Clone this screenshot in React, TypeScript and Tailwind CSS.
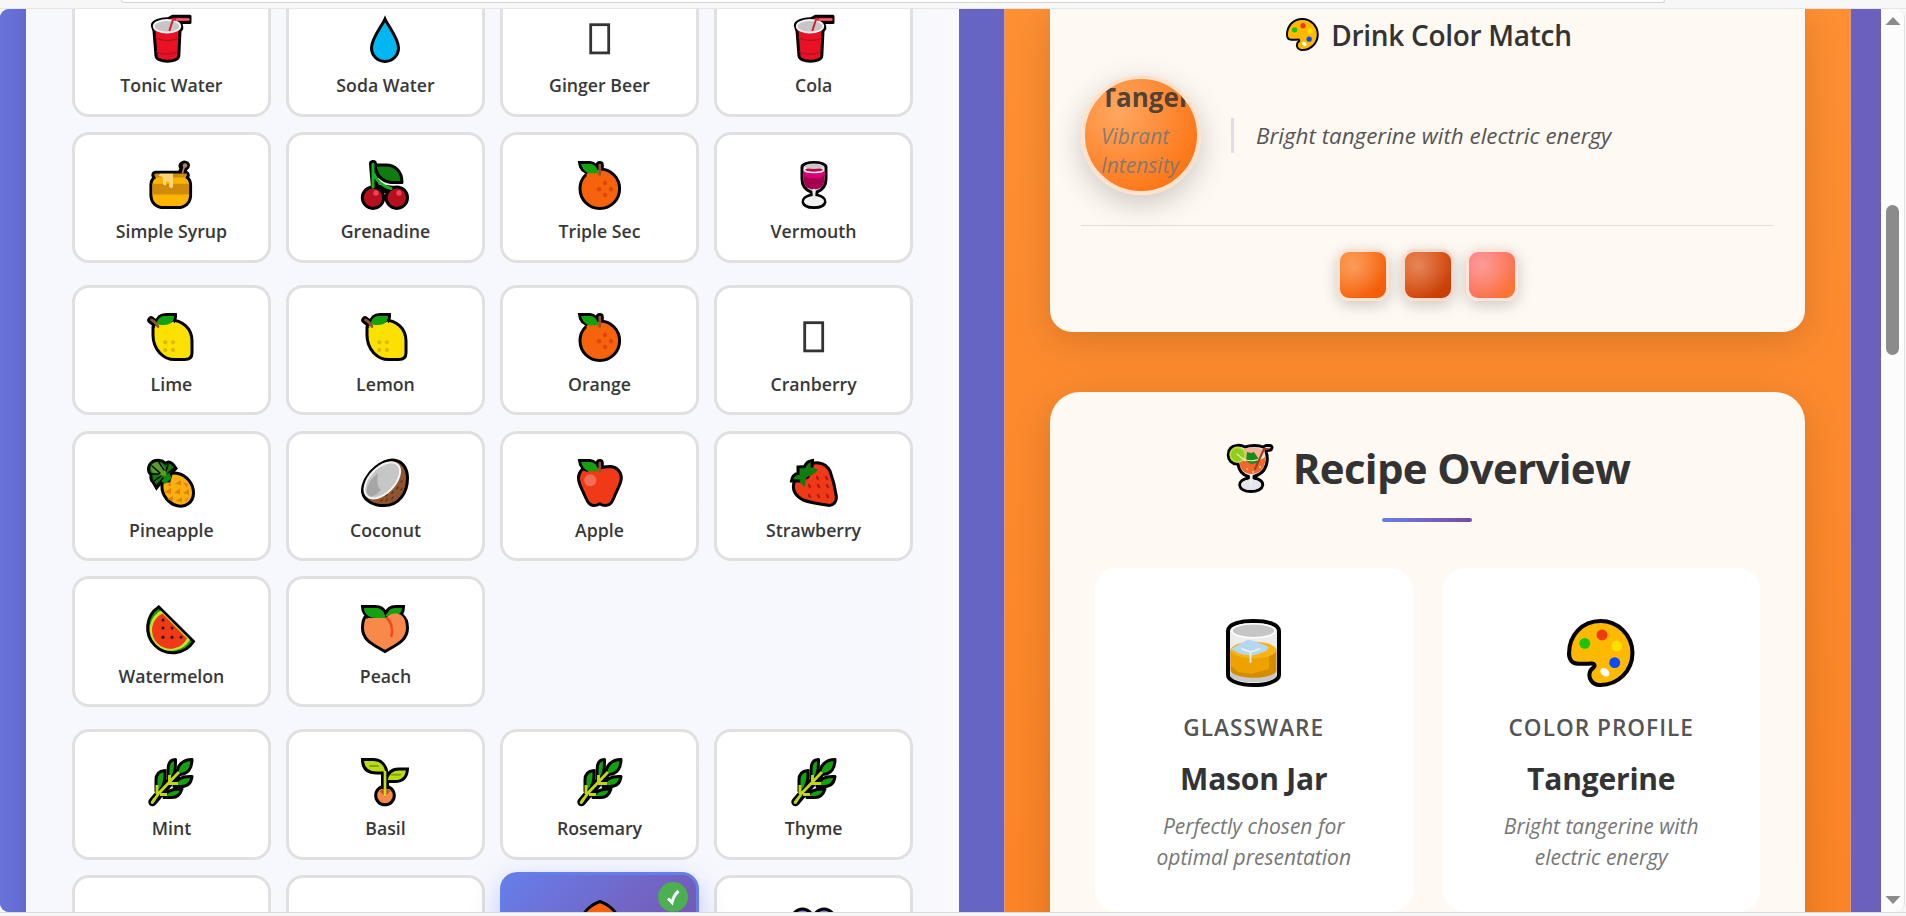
import type { ReactNode } from "react";

type IconProps = { className?: string };

function Glyph({ className = "size-12", box = "0 0 48 48", children }: IconProps & { box?: string; children: ReactNode }) {
  return (
    <svg className={`block shrink-0 overflow-visible ${className}`} viewBox={box} fill="none" stroke="#000" strokeWidth="3" strokeLinejoin="round" strokeLinecap="round">
      {children}
    </svg>
  );
}

const Cup = () => (
  <Glyph>
    <path d="M5.3 10.5C5.3 6 14 3.6 21 3.8L25.5 1.3H43V7.5H31.5C34 8.7 35.2 10.5 34.8 13.5L33 16L31.8 41C31.5 48 9.5 48 9 41L7 16Z" fill="#e81224" />
    <path d="M8 22.5C14 26.5 27 26.5 32.5 22.5M9 36.5C14 40 26 40 31 36.5" stroke="#a80f1c" strokeWidth="1" />
    <ellipse cx="20" cy="11.3" rx="13.3" ry="6.3" fill="#c6c6c6" stroke="#f2f2f2" strokeWidth="1.8" />
    <path d="M22.3 16L26 4.500H43" stroke="#d21f30" strokeWidth="2" strokeLinecap="butt" />
    <path d="M29 4.500H42" stroke="#e8677c" strokeWidth="2" strokeLinecap="butt" />
  </Glyph>
);

const Drop = () => (
  <Glyph>
    <path d="M24 4C21 11 10.5 23 10.5 33a13.5 13.5 0 0 0 27 0C37.5 23 27 11 24 4Z" fill="#00b7f1" strokeLinejoin="miter" />
  </Glyph>
);

const Missing = () => (
  <Glyph>
    <rect x="14.7" y="9.7" width="18" height="28.2" stroke="#333" strokeWidth="2.8" strokeLinejoin="miter" />
  </Glyph>
);

const Honey = () => (
  <Glyph>
    <path d="M32 12L34 7.5C31 3 36 .2 39 1.3C42.5 2.7 42.5 6 38.5 9L37.8 12Z" fill="#000" />
    <path d="M9 11.3H38C41 11.3 42.5 14.5 40 16.5C42.5 18 43.6 20 43.6 24V34C43.6 42 38 46.6 30.5 46.6H17C9.500 46.600 3.900 42 3.900 34V24C3.900 20 5 18 7.500 16.500C4.500 14.500 6 11.300 9 11.300Z" fill="#fcb400" />
    <path d="M5.400 22.700H42.100V33.600H5.400Z" fill="#d18b0b" stroke="none" />
    <path d="M7.500 12.800H40L38.500 16.500H8.500Z" fill="#cf8b10" stroke="none" />
    <path d="M13 12.800H26V26Q24 28 22.200 26V20.500H19V24Q17.500 25 16 23V17Q15 15 11.500 15Z" fill="#ffd678" stroke="none" />
    <circle cx="38" cy="4.500" r="2.300" fill="#b08060" stroke="none" />
    <path d="M37.500 5L35.500 12" stroke="#b08060" strokeWidth="1.700" />
  </Glyph>
);

const Cherries = () => (
  <Glyph>
    <path d="M12 3L14 27L34 29" stroke="#000" strokeWidth="8" />
    <path d="M14 4H25C34 4 41 10 41 21.500H30C20 20 15 13 14 4Z" fill="#107c10" />
    <circle cx="12" cy="36.700" r="10.700" fill="#b60f1d" />
    <circle cx="35.800" cy="36.700" r="10.700" fill="#b60f1d" />
    <path d="M12 3.200V26M13 13C16 21 21 25 30 27.500" stroke="#16b020" strokeWidth="3" />
    <circle cx="15" cy="32" r="2.700" fill="#f04255" stroke="none" />
    <circle cx="38" cy="32" r="2.700" fill="#f04255" stroke="none" />
  </Glyph>
);

const Orange = () => (
  <Glyph>
    <path d="M23.800 4V9" stroke="#000" strokeWidth="8" />
    <circle cx="23.800" cy="27.700" r="19.800" fill="#f7630c" />
    <path d="M3.500 1.500H14C19 2 21.500 5 22.500 12H14C8 11.500 4 8 3.500 1.500Z" fill="#13a10e" strokeLinejoin="miter" />
    <path d="M13 10.500L22 9L26 11L24 18L14 17L10 14Z" fill="#f7630c" stroke="none" />
    <path d="M5.500 3H14C19 3.500 21 6 22.500 12.300H14C9.500 12 6.500 8 5.500 3Z" fill="#13a10e" stroke="none" />
    <path d="M23.800 4V13.500" stroke="#8e562e" strokeWidth="2.700" />
    <g fill="#da4a07" stroke="none">
      <circle cx="29" cy="22" r="2.200" />
      <circle cx="23" cy="28.300" r="2.200" />
      <circle cx="35" cy="28.300" r="2.200" />
      <circle cx="29" cy="34" r="2.200" />
    </g>
  </Glyph>
);

const Wine = () => (
  <Glyph>
    <path d="M12 6C12 0 36 0 36 6V18C36 25 32 29 27 31L26.500 34C38.500 36 38 46.600 24 46.600S9.500 36 21.500 34L21 31C16 29 12 25 12 18Z" fill="#d8d8d8" />
    <path d="M13.500 9H34.500V18C34.500 25 30 28.500 24 28.500S13.500 25 13.500 18Z" fill="#a4004f" stroke="none" />
    <path d="M13.500 9H34.500V15Q24 20 13.500 15Z" fill="#d90074" stroke="none" />
    <ellipse cx="24" cy="8.800" rx="9.800" ry="2.800" fill="#c3003f" stroke="#f4f4f4" strokeWidth="1.500" />
    <ellipse cx="24" cy="5.200" rx="9" ry="2.800" fill="#c8c8c8" stroke="none" />
    <ellipse cx="24" cy="40.300" rx="10" ry="5" fill="#f2f2f2" stroke="none" />
    <path d="M24 29V38" stroke="#e8e8e8" strokeWidth="2.600" />
  </Glyph>
);

const Lemon = () => (
  <Glyph>
    <path d="M4 7L9 11" strokeWidth="7.500" />
    <path d="M6 14V22C6 37 17 46.600 27.500 46.600H37.500C42.500 46.600 45 44.500 45 40V28C45 15 35 7 23 7Z" fill="#fce100" />
    <path d="M9 10.500C10 4.500 14 1.500 19 1.500H28.500C29 8 25 12.500 17 12.500Z" fill="#13a10e" strokeLinejoin="miter" />
    <path d="M7.500 14L10 11H17C23 11 25 9 26.500 8.500L29 14L15 20Z" fill="#fce100" stroke="none" />
    <path d="M9.500 10.500C11 5 14 3 18 3H27C27 8 24 12 17 12C13 12 11 11.500 9.500 10.500Z" fill="#13a10e" stroke="none" />
    <path d="M4.500 7C7 8 9 10 11 13.500" stroke="#8e562e" strokeWidth="2.700" />
    <g fill="#d9b800" stroke="none">
      <circle cx="18.300" cy="29.300" r="2.100" />
      <circle cx="26" cy="29.300" r="2.100" />
      <circle cx="18.300" cy="37" r="2.100" />
      <circle cx="26" cy="37" r="2.100" />
    </g>
  </Glyph>
);

const Pineapple = () => (
  <Glyph>
    <ellipse cx="30.700" cy="30.600" rx="14.500" ry="17.700" transform="rotate(-38 30.700 30.600)" fill="#fcb00f" />
    <path d="M2 13C0 6 5 .5 13 1.500C16 1.500 17 3 18.500 4.500C22 1.500 25 4 26.500 6L29 9.500L24 15L22 22L15 22L9.500 29L6 23C3 21 4 18 4 16Z" fill="#107c10" strokeLinejoin="miter" />
    <path d="M22 14L14 22L18 25L25 19Z" fill="#0d8a12" stroke="none" />
    <path d="M4 9C4 4 9 2 14 4L19 11V17L12 16L5 13Z" fill="#5b9b28" stroke="none" />
    <path d="M5 7L13 14M12 3.500L17 11M21 5.500L19 12M27 9L21 14M4 15H12M7 22L14 17M10 26L16 19" strokeWidth="1.400" />
    <path d="M20 26L24 23V27ZM28 25L34 21V26ZM36 23L41 25L40 29ZM17 33L24 29V35ZM27 34L33 29V35ZM36 34L42 30V36ZM20 40L26 37V42ZM29 42L35 38V43ZM38 41L42 38L39 43Z" fill="#e28200" stroke="none" />
  </Glyph>
);

const Coconut = () => (
  <Glyph>
    <path d="M35 1.500C42 3 46.500 10 46.500 19C46.500 34 38 46.600 23 46.600C13 46.600 3 42 1.500 33C1 24 7 14 15 8C21 3.500 29 0 35 1.500Z" fill="#8e562e" />
    <ellipse cx="21.300" cy="21.300" rx="22" ry="12.600" transform="rotate(-46 21.300 21.300)" fill="#c6c6c6" stroke="#f3f3f3" strokeWidth="2" />
    <path d="M17 14C6 23 3 33 8 37C12 38 17 35 19.500 31C16 27 16 19 17 14Z" fill="#a6a6a6" stroke="none" />
    <path d="M20 42L21 41M25 42L26 40M31 40L32 38M25 37L26 36M31 34L32 33M36 30L37 28M40 23L41 22M40 31L41 29" stroke="#68310f" strokeWidth="1.500" />
  </Glyph>
);

const Apple = () => (
  <Glyph>
    <path d="M23.800 4V10" strokeWidth="8" />
    <path d="M23.800 9.500C27 7.500 31 7.500 35 7.500C41 8 45.300 13 45.300 19C45.300 24 42 29 39 36C36 44 34 46.600 29.500 46.600C27 46.600 25.500 46 23.800 44.800C22 46 20.500 46.600 18 46.600C13.500 46.600 11.500 43 8.500 36C5.500 29 2.500 25 2.500 19C2.500 13 7 8 12.500 8Z" fill="#f03a17" />
    <path d="M3.500 1.500H14C19 2 21.500 5 22.500 12H14C8 11.500 4 8 3.500 1.500Z" fill="#13a10e" strokeLinejoin="miter" />
    <path d="M11 10L22 9L26 11L24 18L14 17Z" fill="#f03a17" stroke="none" />
    <path d="M5.500 3H14C19 3.500 21 6 22.500 12.300H14C9.500 12 6.500 8 5.500 3Z" fill="#13a10e" stroke="none" />
    <path d="M23.800 4V12.500" stroke="#8e562e" strokeWidth="2.700" />
    <circle cx="14.300" cy="21.300" r="6" fill="#f26d57" stroke="none" />
  </Glyph>
);

const Strawberry = () => (
  <Glyph>
    <path d="M15 7C24 2 35 2.500 40 12C43 20 45 28 46.300 37C47 43 43 47 38 46.300C29 45 20 43.500 13 41C4 36 2 29 4.500 22Z" fill="#f03a17" />
    <path d="M8 8L14.500 7.500C16 4 18 2 22.500 1.500L22 8L18 18L10 22H1.500C2 18 4 15 8 14.500Z" fill="#107c10" strokeLinejoin="miter" />
    <path d="M21 8L28 10.500C25 15 21 17 16.500 18L14.500 28L10.500 24L9 18Z" fill="#107c10" stroke="none" />
    <path d="M19 26L20 28M28 26L29 28M37 26L38 28M27 18L28 20M36 18L37 20M19 36L20 38M28 36L29 38M37 36L38 38" stroke="#b51b12" strokeWidth="2.500" />
  </Glyph>
);

const Watermelon = () => (
  <Glyph>
    <path d="M11.700 2A25 25 0 1 0 46.500 36.500Z" fill="#13a10e" strokeLinejoin="miter" />
    <path d="M13.800 5.500A21.500 21.500 0 1 0 43 34.800Z" fill="#c8e030" stroke="none" />
    <path d="M15.500 8.500A18.500 18.500 0 1 0 40 33.500Z" fill="#f03a17" stroke="none" />
    <g fill="#1a0a05" stroke="none">
      <circle cx="16" cy="15" r="1.500" />
      <circle cx="16" cy="23" r="1.500" />
      <circle cx="25" cy="23" r="1.500" />
      <circle cx="16" cy="32.200" r="1.500" />
      <circle cx="25" cy="32.200" r="1.500" />
      <circle cx="34" cy="32.200" r="1.500" />
    </g>
  </Glyph>
);

const Peach = () => (
  <Glyph>
    <path d="M4 12C2 15 1.500 18 1.500 23C1.500 37 16 41 24 46.600C32 41 46.500 37 46.500 23C46.500 18 45 13 41 10Z" fill="#f7894a" />
    <path d="M1.500 1.500H14C20 1.500 23 4 24.500 8C27 4 29 1.500 35 1.500H42.500C42.500 6 41 10 37 11L24 13H14C6 13 2 9 1.500 1.500Z" fill="#13a10e" strokeLinejoin="miter" />
    <path d="M7 13H25C28 9 34 7 40 10C44 13 45 18 44 23L30 30L8 24Z" fill="#f7894a" stroke="none" />
    <path d="M3 3H14C20 3 23 7 24.500 13H14C7 12.500 3.500 9 3 3Z" fill="#13a10e" stroke="none" />
    <path d="M26 13C31 18 32 24 30.500 31" stroke="#f04a20" strokeWidth="2.500" />
  </Glyph>
);

const Herb = () => (
  <Glyph>
    <path d="M5.500 44L14 34L29 17" strokeWidth="8.500" />
    <path d="M30 16C30 7 36 1.600 45 1.500C45 10 41 16 33 16.500Z" fill="#13a10e" />
    <path d="M21 24V12C21 5 24 1.500 28.500 1.500C28.500 9 29 18 21 24Z" fill="#13a10e" />
    <path d="M9 33V22C9 16 12 13 18 12.500C18.500 20 18 28 12 33Z" fill="#13a10e" />
    <path d="M27 27C30 20 37 18 45 18.500C44 26 39 28.500 34 28.500H27Z" fill="#13a10e" />
    <path d="M17 38.500C20 32 27 30.500 35 31C33 37 30 39.500 25 39.500H17Z" fill="#13a10e" />
    <path d="M5.200 44.500L12 35L32 14M22.500 17V24M10 27V36M22 25.500H31M13 36.500H20" stroke="#bfd814" strokeWidth="2.900" strokeLinecap="butt" />
    <path d="M5.200 44.500L7.500 41" stroke="#bfd814" strokeWidth="3" />
  </Glyph>
);

const Seedling = () => (
  <Glyph>
    <circle cx="24" cy="37.500" r="9.300" fill="#f7894a" />
    <path d="M24 31V16" strokeWidth="8" strokeLinecap="butt" />
    <path d="M19 33L24 30L29 33L24 39Z" fill="#c4501b" stroke="none" />
    <path d="M1.500 1.500H12C20 1.500 25 7 26 15H16C7 15 1.500 11 1.500 1.500Z" fill="#b9dc12" strokeLinejoin="miter" />
    <path d="M46.500 11H38C31 11 26 15 25 23.500H34C42 23.500 46 19 46.500 11Z" fill="#b9dc12" strokeLinejoin="miter" />
    <path d="M24 13V38" stroke="#c5df18" strokeWidth="2.700" strokeLinecap="butt" />
    <path d="M9 8H17M31 16.700H39" stroke="#7fa610" strokeWidth="2" />
  </Glyph>
);

const Blossom = () => (
  <Glyph>
    <path d="M24 1.500C17 4 8 10 5 20L24 34L43 20C40 10 31 4 24 1.500Z" fill="#f7630c" />
  </Glyph>
);

const Berries = () => (
  <Glyph>
    <circle cx="12.500" cy="15.500" r="10.500" fill="#8a7cd8" />
    <circle cx="34" cy="15.500" r="10.500" fill="#8a7cd8" />
  </Glyph>
);

const Palette = ({ className }: IconProps) => (
  <Glyph className={className} box="0 0 67 67">
    <path d="M33 2A31.500 31.500 0 0 1 33 65C25 65.500 20 58 23 51C25 48 28 47.500 27 45C26 43 24 44 21 44H11C5 44 2 40 2 34C2 16 15 2 33 2Z" fill="#ffb900" strokeWidth="4" />
    <g stroke="none">
      <circle cx="17.500" cy="24" r="5.400" fill="#16c60c" />
      <circle cx="34.500" cy="15.700" r="5.400" fill="#f03a17" />
      <circle cx="49" cy="26.500" r="5.200" fill="#fce100" />
      <circle cx="47" cy="43" r="5.400" fill="#0a4bff" />
      <ellipse cx="37.300" cy="52.500" rx="5" ry="3.600" transform="rotate(40 37.300 52.500)" fill="#fff" />
    </g>
  </Glyph>
);

const Tropical = ({ className }: IconProps) => (
  <Glyph className={className}>
    <path d="M10 1.500C13 1 16 2 18 3C24 .8 32 1 36 3L39 1.500H43C46 2 45.500 6 42 6.300L39 7C40.500 12 41 20 37 26C34 30 30 31.500 27 32.500L27 34C40 36 38 47.500 24 47.500S9 36 21.500 34L21.500 32.500C15 31 12 27 11 20C5 20.500 1 16 1.300 10.500C1.500 5 5 2 10 1.500Z" fill="#e9e2df" />
    <path d="M13 15C16 18 31 19 38 13C39 22 35 29 25 30C16 30 13 24 12 17Z" fill="#f3682a" stroke="none" />
    <path d="M15 6C20 2 34 3 37 7L34 15H18Z" fill="#f6b09a" stroke="none" />
    <circle cx="10.500" cy="10.700" r="7.300" fill="#8fce1c" stroke="#b8dd3d" strokeWidth="1.600" />
    <path d="M20 8L24 9L27 8L31 14L30 19L24 20L19 17Z" fill="#168c1c" stroke="none" />
    <path d="M10 10L16 15C22 18 31 17 36 13" stroke="#e8f0b0" strokeWidth="1.200" />
    <path d="M28 25L37 5H41" stroke="#a63a22" strokeWidth="2" />
    <path d="M20 25H20.200M33 23H33.200M26 28H26.200" stroke="#ffc090" strokeWidth="2" />
    <ellipse cx="24" cy="40.800" rx="10" ry="5.300" fill="#e3e6ec" stroke="none" />
    <path d="M24 31V40" stroke="#f0f0f2" strokeWidth="2.200" />
  </Glyph>
);

const Tumbler = () => (
  <Glyph className="h-[68px] w-[55px]" box="0 0 55 68">
    <path d="M2 12C2 5 14 2 27.500 2S53 5 53 12V56C53 62 41 66 27.500 66S2 62 2 56Z" fill="#ececec" strokeWidth="4" />
    <path d="M4.500 53V57C8 65 47 65 50.500 57V53Z" fill="#c9c9c9" stroke="none" />
    <path d="M4.500 31H50.500V52C46 61 9 61 4.500 52Z" fill="#d48d00" stroke="none" />
    <path d="M4.500 31H43V50L25 55L12 53L4.500 46Z" fill="#eda200" stroke="none" />
    <path d="M4.500 31C6 20 49 20 50.500 31C49 42 6 42 4.500 31Z" fill="#f5b51a" stroke="none" />
    <path d="M5 30L21 21Q24 20.500 28 22L41 27Q44 29 40 32L29 36Q20 37 12 34Z" fill="#b5d8ef" stroke="none" />
    <path d="M16 30L24.500 33L33.500 30M24.500 33V43" stroke="#e8f3f2" strokeWidth="1.800" />
    <ellipse cx="27.500" cy="11.700" rx="21.500" ry="7" fill="#c6c6c6" stroke="#fff" strokeWidth="1.600" />
  </Glyph>
);

type Item = { name: string; icon: ReactNode; selected?: boolean };

const groups: Item[][] = [
  [
    { name: "Tonic Water", icon: <Cup /> },
    { name: "Soda Water", icon: <Drop /> },
    { name: "Ginger Beer", icon: <Missing /> },
    { name: "Cola", icon: <Cup /> },
    { name: "Simple Syrup", icon: <Honey /> },
    { name: "Grenadine", icon: <Cherries /> },
    { name: "Triple Sec", icon: <Orange /> },
    { name: "Vermouth", icon: <Wine /> },
  ],
  [
    { name: "Lime", icon: <Lemon /> },
    { name: "Lemon", icon: <Lemon /> },
    { name: "Orange", icon: <Orange /> },
    { name: "Cranberry", icon: <Missing /> },
    { name: "Pineapple", icon: <Pineapple /> },
    { name: "Coconut", icon: <Coconut /> },
    { name: "Apple", icon: <Apple /> },
    { name: "Strawberry", icon: <Strawberry /> },
    { name: "Watermelon", icon: <Watermelon /> },
    { name: "Peach", icon: <Peach /> },
  ],
  [
    { name: "Mint", icon: <Herb /> },
    { name: "Basil", icon: <Seedling /> },
    { name: "Rosemary", icon: <Herb /> },
    { name: "Thyme", icon: <Herb /> },
    { name: "", icon: null },
    { name: "", icon: null },
    { name: "", icon: <Blossom />, selected: true },
    { name: "", icon: <Berries /> },
  ],
];

function IngredientCard({ name, icon, selected }: Item) {
  if (selected) {
    return (
      <div className="relative -mt-[3px] flex h-[130.6px] flex-col items-center rounded-[17px] border-[3px] border-[#667eea] bg-linear-135 from-[#667eea] to-[#764ba2] pt-[25.500px] shadow-[0_9px_28px_rgba(102,126,234,0.4)]">
        {icon}
        <span className="absolute top-[7px] right-[8px] flex size-[30px] items-center justify-center rounded-full bg-[#4caf50]">
          <svg className="size-[18px]" viewBox="0 0 18 18" fill="none" stroke="#fff" strokeWidth="3">
            <path d="M4 10.500L8 14.500C9 10 11 6 14.500 3" />
          </svg>
        </span>
      </div>
    );
  }
  return (
    <div className="flex h-[130.6px] flex-col items-center rounded-[17px] border-[3px] border-[#e0e0e0] bg-white pt-[25.700px]">
      {icon}
      <span className="mt-[10.600px] text-[17.700px] leading-6 font-semibold text-[#383838]">{name}</span>
    </div>
  );
}

function Swatch({ className }: IconProps) {
  return (
    <div className={`size-[52px] rounded-xl border-[3px] border-white/80 shadow-[0_4px_15px_rgba(0,0,0,0.2)] ${className}`}>
      <div className="size-full bg-radial-[circle_at_30%_30%] from-white/30 to-transparent to-70%" />
    </div>
  );
}

function OverviewCard({ icon, label, value, lines }: { icon: ReactNode; label: string; value: string; lines: string[] }) {
  return (
    <div className="flex h-[344px] w-[317.500px] flex-col items-center rounded-[22px] bg-white pt-[51px]">
      <div className="h-[68px]">{icon}</div>
      <div className="mt-[25px] text-[22.600px] leading-8 font-semibold tracking-[1px] whitespace-nowrap text-[#555] uppercase">{label}</div>
      <div className="mt-[15px] text-[30px] leading-10 font-bold tracking-[-0.2px] whitespace-nowrap text-[#333]">{value}</div>
      <div className="mt-[12px] text-center text-[21px] leading-[31px] text-[#777] italic">
        {lines.map((line) => (
          <div key={line} className="whitespace-nowrap">{line}</div>
        ))}
      </div>
    </div>
  );
}

export default function App() {
  return (
    <div className="flex h-[916px] w-[1906px] flex-col overflow-hidden bg-[#f7f7f7] font-['Open_Sans','Noto_Sans',sans-serif]">
      <div className="h-[9px] shrink-0 border-b border-[#e6e6e6] px-[121px]">
        <div className="h-[3px] w-[1544px] rounded-b-[10px] border border-t-0 border-[#d4d4d4] bg-white" />
      </div>

      <div className="flex h-[903px] shrink-0 overflow-hidden rounded-[9px]">
        <main className="flex w-[1881px] shrink-0 overflow-hidden bg-linear-to-r from-[#6772d8] via-[#6664c4] to-[#6c60bf]">
          <div className="w-[26px] shrink-0 bg-linear-to-r from-[#6773da] to-[#636ace]" />
          <section className="w-[933px] shrink-0 overflow-hidden bg-linear-to-r from-[#f7f8fd] via-[#f7f8fe] via-95% to-[#fafafb] pr-[46.300px] pl-[46.300px]">
            <div className="-mt-[22.800px] flex flex-col gap-[22.200px]">
              {groups.map((items, group) => (
                <div key={group} className="grid grid-cols-4 gap-x-[15.800px] gap-y-[15.200px]">
                  {items.map((item, index) => (
                    <IngredientCard key={index} {...item} />
                  ))}
                </div>
              ))}
            </div>
          </section>

          <div className="w-[45px] shrink-0" />

          <section className="w-[847px] shrink-0 overflow-hidden border-x border-[#dd9a7c] bg-linear-to-b from-[#fe8f32] to-[#fb8426] px-[45px]">
            <div className="h-[323px] rounded-b-[22px] bg-[#fef9f2] px-[31px] shadow-[0_9px_38px_rgba(0,0,0,0.15)]">
              <div className="flex h-[57px] items-center justify-center gap-[12px] pt-[1px] pl-[3px]">
                <Palette className="-mt-[7px] size-[33px]" />
                <h3 className="-mt-[6px] text-[28px] leading-10 font-semibold tracking-[-0.3px] whitespace-nowrap text-[#333]">Drink Color Match</h3>
              </div>
              <div className="mt-[9px] flex h-[120px] items-center">
                <div className="size-[120px] shrink-0 overflow-hidden rounded-full border-4 border-[#ffe1cc] bg-radial-[circle_at_30%_30%] from-[#ffa761] to-[#fd7414] to-80% shadow-[0_9px_30px_rgba(0,0,0,0.2)]">
                  <div className="flex flex-col pl-[16px]">
                    <div className="text-[26px] leading-9 font-bold whitespace-nowrap text-[#333]/85">Tangerine</div>
                    <div className="mt-[7px] w-24 text-[21px] leading-[29px] text-[#777]/90 italic">
                      <div>Vibrant</div>
                      <div>Intensity</div>
                    </div>
                  </div>
                </div>
                <div className="ml-[30px] border-l-[3px] border-[#e1dbec] pl-[22px] text-[22.400px] leading-[35px] whitespace-nowrap text-[#555] italic">Bright tangerine with electric energy</div>
              </div>
              <div className="mt-[30px] border-t border-[#e3ded8]" />
              <div className="mt-[23px] flex justify-center gap-[12.500px]">
                <Swatch className="bg-linear-135 from-[#fb7d1d] to-[#f35706]" />
                <Swatch className="bg-linear-135 from-[#e35a18] to-[#c53b04]" />
                <Swatch className="bg-linear-135 from-[#fb707a] to-[#fc7523]" />
              </div>
            </div>

            <div className="mt-[60px] h-[560px] rounded-t-[30px] bg-[#fef9f2] px-[45px] pt-[46px] shadow-[0_9px_38px_rgba(0,0,0,0.15)]">
              <div className="flex h-[60px] items-center justify-center gap-[18px] pl-[2px]">
                <Tropical className="size-[48px]" />
                <h2 className="text-[42px] leading-[60px] font-bold tracking-[-0.7px] whitespace-nowrap text-[#333]">Recipe Overview</h2>
              </div>
              <div className="mt-[20px] ml-[287px] h-1 w-[90px] rounded-full bg-linear-to-r from-[#667eea] to-[#764ba2]" />
              <div className="mt-[46px] flex justify-between">
                <OverviewCard icon={<Tumbler />} label="Glassware" value="Mason Jar" lines={["Perfectly chosen for", "optimal presentation"]} />
                <OverviewCard icon={<Palette className="size-[68px]" />} label="Color Profile" value="Tangerine" lines={["Bright tangerine with", "electric energy"]} />
              </div>
            </div>
          </section>
        </main>

        <aside className="flex w-[24px] shrink-0 flex-col items-center rounded-r-[9px] border-r border-[#e3e3e3] bg-[#fcfcfc] pt-[8px] pb-[8px]">
          <svg className="h-2 w-4" viewBox="0 0 16 8">
            <path d="M8 0L15.500 8H.5Z" fill="#8b8b8b" />
          </svg>
          <div className="mt-[180px] h-[150px] w-[13px] rounded-full bg-[#8b8b8b]" />
          <svg className="mt-auto h-2 w-4" viewBox="0 0 16 8">
            <path d="M8 8L15.500 0H.5Z" fill="#8b8b8b" />
          </svg>
        </aside>
      </div>
      <div className="h-[4px] shrink-0 border-t border-[#dcdcdc]" />
    </div>
  );
}
